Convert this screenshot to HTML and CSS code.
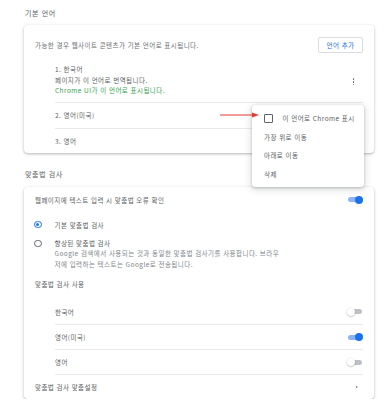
FILE: index.html
```html
<!DOCTYPE html>
<html lang="ko">
  <head>
    <meta charset="UTF-8" />
    <meta name="viewport" content="width=device-width, initial-scale=1.0" />
    <title>언어 설정</title>
    <link rel="stylesheet" href="styles.css">
  </head>
  <body>
    <div class="page">
      <div class="section-title">기본 언어</div>
      <div class="card">
        <div class="intro">
          <span>가능한 경우 웹사이트 콘텐츠가 기본 언어로 표시됩니다.</span>
          <div class="btn">언어 추가</div>
        </div>
        <div class="lang-list">
          <div class="lang-item first">
            <div>
              <div>1. 한국어</div>
              <div>페이지가 이 언어로 번역됩니다.</div>
              <div class="green">Chrome UI가 이 언어로 표시됩니다.</div>
            </div>
            <div class="kebab"><i></i><i></i><i></i></div>
          </div>
          <div class="lang-item">2. 영어(미국)</div>
          <div class="lang-item last">3. 영어</div>
        </div>
      </div>

      <div class="section-title second">맞춤법 검사</div>
      <div class="card">
        <div class="row main-row">
          <span>웹페이지에 텍스트 입력 시 맞춤법 오류 확인</span>
          <div class="toggle on"><b></b></div>
        </div>
        <div class="radio-row basic">
          <div class="radio checked"></div>
          <span>기본 맞춤법 검사</span>
        </div>
        <div class="radio-row enhanced">
          <div class="radio"></div>
          <div>
            <div>향상된 맞춤법 검사</div>
            <div class="muted">Google 검색에서 사용되는 것과 동일한 맞춤법 검사기를 사용합니다. 브라우<br>저에 입력하는 텍스트는 Google로 전송됩니다.</div>
          </div>
        </div>
        <div class="row sub-title">맞춤법 검사 사용</div>
        <div class="lang-list">
          <div class="toggle-item">
            <span>한국어</span>
            <div class="toggle"><b></b></div>
          </div>
          <div class="toggle-item">
            <span>영어(미국)</span>
            <div class="toggle on"><b></b></div>
          </div>
          <div class="toggle-item">
            <span>영어</span>
            <div class="toggle"><b></b></div>
          </div>
        </div>
        <div class="row custom">
          <span>맞춤법 검사 맞춤설정</span>
          <span class="caret"></span>
        </div>
      </div>
    </div>

    <div class="menu">
      <div class="menu-item"><span class="checkbox"></span>이 언어로 Chrome 표시</div>
      <div class="menu-item">가장 위로 이동</div>
      <div class="menu-item">아래로 이동</div>
      <div class="menu-item">삭제</div>
    </div>

    <svg class="arrow" width="42" height="8" viewBox="0 0 42 8">
      <line x1="0" y1="4" x2="33" y2="4" stroke="#e53935" stroke-width="1" />
      <polygon points="32,1.5 39,4 32,6.5" fill="#e53935" />
    </svg>
  </body>
</html>
```

FILE: styles.css
```css
body {
  font-family: "Noto Sans CJK KR", "Noto Sans", sans-serif;
  font-size: 6.5px;
  letter-spacing: 0.45px;
  color: #5a5d61;
  background: #fff;
  margin: 0;
}
.page {
  padding: 0 12px 0 24px;
  width: 350px;
}
.section-title {
  height: 25px;
  display: flex;
  align-items: center;
  font-size: 7px;
  letter-spacing: 0.6px;
  color: #5a5d61;
  padding-left: 1px;
}
.section-title.second {
  margin-top: 8px;
  height: 26px;
}
.card {
  border-radius: 4px;
  box-shadow: 0 1px 2px rgba(60, 64, 67, 0.25), 0 1px 3px 1px rgba(60, 64, 67, 0.1);
  padding: 0 11px;
}
.intro {
  display: flex;
  justify-content: space-between;
  align-items: center;
  padding-top: 12px;
  height: 16px;
  color: #6a6d72;
}
.btn {
  width: 43px;
  height: 14px;
  border: 1px solid #dadce0;
  border-radius: 2px;
  color: #1a73e8;
  display: flex;
  align-items: center;
  justify-content: center;
}
.lang-list {
  margin-left: 20px;
}
.lang-item {
  display: flex;
  align-items: center;
  justify-content: space-between;
  height: 25px;
  border-bottom: 1px solid #e8eaed;
}
.lang-item.first {
  height: auto;
  padding: 11px 0 6px;
  line-height: 10.5px;
}
.lang-item.last {
  border-bottom: none;
  height: 24px;
}
.green {
  color: #34a050;
}
.kebab {
  display: flex;
  flex-direction: column;
  gap: 1.2px;
  margin: 4px 9px 0 0;
}
.kebab i {
  width: 1.5px;
  height: 1.5px;
  border-radius: 50%;
  background: #5f6368;
}
.row {
  display: flex;
  align-items: center;
  justify-content: space-between;
}
.main-row {
  height: 26px;
}
.radio-row {
  display: flex;
  align-items: center;
}
.radio-row.basic {
  height: 24px;
}
.radio-row.enhanced {
  align-items: flex-start;
  padding-top: 1px;
  line-height: 10.5px;
}
.radio {
  width: 5.5px;
  height: 5.5px;
  border: 1.2px solid #5f6368;
  border-radius: 50%;
  margin: 0 13px 0 -1px;
  flex-shrink: 0;
  position: relative;
}
.radio-row.enhanced .radio {
  margin-top: 2px;
}
.radio.checked {
  border-color: #1a73e8;
}
.radio.checked::after {
  content: "";
  position: absolute;
  left: 1.1px;
  top: 1.1px;
  width: 3.3px;
  height: 3.3px;
  border-radius: 50%;
  background: #1a73e8;
}
.muted {
  color: #80868b;
}
.sub-title {
  height: 30px;
}
.toggle-item {
  display: flex;
  align-items: center;
  justify-content: space-between;
  height: 24px;
  border-bottom: 1px solid #e8eaed;
}
.toggle-item:first-child {
  height: 25px;
}
.toggle {
  width: 14px;
  height: 5px;
  border-radius: 3px;
  background: #bdc1c6;
  position: relative;
  margin-right: 1px;
}
.toggle b {
  position: absolute;
  left: -1px;
  top: -1.5px;
  width: 8px;
  height: 8px;
  border-radius: 50%;
  background: #fff;
  box-shadow: 0 0.5px 1.5px rgba(0, 0, 0, 0.35);
}
.toggle.on {
  background: #8ab4f8;
}
.toggle.on b {
  left: auto;
  right: -1px;
  background: #1a73e8;
  box-shadow: none;
}
.custom {
  height: 24px;
}
.caret {
  width: 0;
  height: 0;
  border-left: 2px solid #5f6368;
  border-top: 1.5px solid transparent;
  border-bottom: 1.5px solid transparent;
  margin-right: 5px;
}
.menu {
  position: absolute;
  left: 252px;
  top: 105px;
  width: 112px;
  padding: 4px 0;
  background: #fff;
  border-radius: 3px;
  box-shadow: 0 1px 3px rgba(60, 64, 67, 0.3), 0 2px 6px 2px rgba(60, 64, 67, 0.12);
}
.menu-item {
  height: 18.5px;
  display: flex;
  align-items: center;
  padding-left: 12px;
  color: #5a5d61;
}
.checkbox {
  width: 6.5px;
  height: 6.5px;
  border: 1.2px solid #5f6368;
  border-radius: 1px;
  margin-right: 10px;
}
.arrow {
  position: absolute;
  left: 220px;
  top: 111px;
}
```
